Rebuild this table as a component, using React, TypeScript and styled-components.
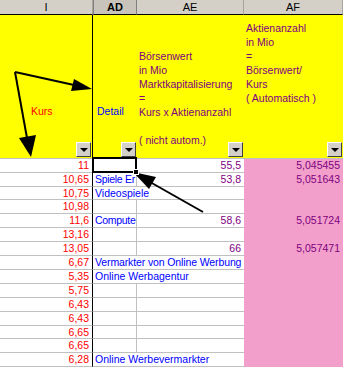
import React from 'react';
import styled, { createGlobalStyle, css } from 'styled-components';

const GlobalStyle = createGlobalStyle`
  html, body {
    margin: 0;
    padding: 0;
    background: #fff;
  }
`;

const COLS = '93px 44px 107px 99px';
const GRID = '#c0c0c0';

const Sheet = styled.div`
  position: relative;
  width: 343px;
  height: 367px;
  overflow: hidden;
  background: #fff;
  font-family: "Liberation Sans", Arial, sans-serif;
  font-size: 10.5px;
`;

const ColHeaderRow = styled.div`
  display: grid;
  grid-template-columns: ${COLS};
  height: 15px;
  font-size: 11px;
`;

const ColHead = styled.div<{ $active?: boolean }>`
  display: flex;
  align-items: center;
  justify-content: center;
  background: #d4d0c8;
  border-right: 1px solid #a8a49c;
  border-bottom: 1px solid #000;
  color: #000;
  font-weight: ${p => (p.$active ? 700 : 400)};
  ${p => p.$active && css`
    background: #c8c4bc;
    border-left: 1px solid #808080;
    border-right: 1px solid #808080;
  `}
`;

const TitleRow = styled.div`
  display: grid;
  grid-template-columns: ${COLS};
  height: 144px;
`;

const TitleCell = styled.div<{ $pb: number; $pl: number; $color: string; $edge?: boolean }>`
  position: relative;
  display: flex;
  flex-direction: column;
  justify-content: flex-end;
  background: #ffff00;
  border-bottom: 1px solid ${GRID};
  border-right: ${p => (p.$edge ? '1px solid #000' : 'none')};
  padding: 0 0 ${p => p.$pb}px ${p => p.$pl}px;
  color: ${p => p.$color};
  line-height: 14px;
  white-space: pre;
`;

const FilterButton = styled.div`
  position: absolute;
  right: 1px;
  bottom: 1px;
  width: 13px;
  height: 13px;
  background: #d4d0c8;
  border: 1px solid;
  border-color: #fff #404040 #404040 #fff;
  display: flex;
  align-items: center;
  justify-content: center;

  &::after {
    content: '';
    border-left: 4px solid transparent;
    border-right: 4px solid transparent;
    border-top: 4px solid #000;
    margin-top: 1px;
  }
`;

const Row = styled.div<{ $h: number }>`
  display: grid;
  grid-template-columns: ${COLS};
  height: ${p => p.$h}px;
`;

const Cell = styled.div<{
  $align?: 'left' | 'right';
  $color?: string;
  $pink?: boolean;
  $edge?: boolean;
  $noRight?: boolean;
  $span?: number;
  $tight?: number;
  $selected?: boolean;
}>`
  position: relative;
  box-sizing: border-box;
  line-height: 13px;
  white-space: nowrap;
  overflow: ${p => (p.$selected ? 'visible' : 'hidden')};
  text-align: ${p => p.$align || 'left'};
  color: ${p => p.$color || '#000'};
  letter-spacing: ${p => p.$tight || 0}px;
  padding: ${p => (p.$align === 'right' ? '0 3px 0 0' : '0 0 0 2px')};
  ${p => p.$span && css`grid-column: span ${p.$span};`}
  ${p => p.$pink
    ? css`background: #f2a0cb;`
    : css`
      background: #fff;
      border-bottom: 1px solid ${GRID};
      border-right: ${p.$edge ? '1px solid #000' : p.$noRight ? 'none' : `1px solid ${GRID}`};
    `}
  ${p => p.$selected && css`
    &::after {
      content: '';
      position: absolute;
      left: -1px;
      top: -2px;
      right: -1px;
      bottom: -1px;
      border: 2px solid #000;
    }
    &::before {
      content: '';
      position: absolute;
      right: -3px;
      bottom: -3px;
      width: 4px;
      height: 4px;
      background: #000;
      border: 1px solid #fff;
      z-index: 1;
    }
  `}
`;

const Arrows = styled.svg`
  position: absolute;
  left: 0;
  top: 0;
  pointer-events: none;
`;

interface SheetRow {
  kurs: string;
  detail?: string;
  spans?: boolean;
  tight?: number;
  wert?: string;
  anzahl?: string;
  h: number;
}

const rows: SheetRow[] = [
  { kurs: '11', wert: '55,5', anzahl: '5,045455', h: 14 },
  { kurs: '10,65', detail: 'Spiele Er', tight: -0.3, wert: '53,8', anzahl: '5,051643', h: 14 },
  { kurs: '10,75', detail: 'Videospiele', spans: true, h: 13 },
  { kurs: '10,98', h: 14 },
  { kurs: '11,6', detail: 'Compute', tight: -0.3, wert: '58,6', anzahl: '5,051724', h: 14 },
  { kurs: '13,16', h: 14 },
  { kurs: '13,05', wert: '66', anzahl: '5,057471', h: 14 },
  { kurs: '6,67', detail: 'Vermarkter von Online Werbung', tight: -0.12, spans: true, h: 14 },
  { kurs: '5,35', detail: 'Online Werbagentur', spans: true, h: 14 },
  { kurs: '5,75', h: 14 },
  { kurs: '6,43', h: 14 },
  { kurs: '6,43', h: 14 },
  { kurs: '6,65', h: 13 },
  { kurs: '6,65', h: 14 },
  { kurs: '6,28', detail: 'Online Werbevermarkter', spans: true, h: 14 },
];

const RED = '#ff0000';
const BLUE = '#0000ff';
const PURPLE = '#800080';

export default function App() {
  return (
    <>
      <GlobalStyle />
      <Sheet>
        <ColHeaderRow>
          <ColHead>I</ColHead>
          <ColHead $active>AD</ColHead>
          <ColHead>AE</ColHead>
          <ColHead>AF</ColHead>
        </ColHeaderRow>

        <TitleRow>
          <TitleCell $pb={40} $pl={31} $color={RED} $edge>
            Kurs
            <FilterButton />
          </TitleCell>
          <TitleCell $pb={40} $pl={4} $color={BLUE}>
            Detail
            <FilterButton />
          </TitleCell>
          <TitleCell $pb={11} $pl={2} $color={PURPLE}>
            {'Börsenwert\nin Mio\nMarktkapitalisierung\n=\nKurs x Aktienanzahl\n\n( nicht autom.)'}
            <FilterButton />
          </TitleCell>
          <TitleCell $pb={53} $pl={2} $color={PURPLE}>
            {'Aktienanzahl\nin Mio\n=\nBörsenwert/\nKurs\n( Automatisch )'}
            <FilterButton />
          </TitleCell>
        </TitleRow>

        {rows.map((r, i) => (
          <Row key={i} $h={r.h}>
            <Cell $align="right" $color={RED} $edge>{r.kurs}</Cell>
            {r.spans ? (
              <Cell $color={BLUE} $span={2} $tight={r.tight} $noRight>{r.detail}</Cell>
            ) : (
              <>
                <Cell $color={BLUE} $tight={r.tight} $selected={i === 0}>{r.detail}</Cell>
                <Cell $align="right" $color={PURPLE} $noRight>{r.wert}</Cell>
              </>
            )}
            <Cell $align="right" $color={PURPLE} $pink>{r.anzahl}</Cell>
          </Row>
        ))}

        <Arrows width="343" height="367" viewBox="0 0 343 367">
          <g stroke="#000" strokeWidth="2" fill="none">
            <line x1="15" y1="72" x2="74" y2="85" />
            <line x1="15" y1="72" x2="27" y2="138" />
            <line x1="203" y1="212" x2="150" y2="182" />
          </g>
          <g fill="#000">
            <polygon points="92,89 74,79 71,91" />
            <polygon points="31,157 36,135 19,138" />
            <polygon points="133,172 156,177 149,189" />
          </g>
        </Arrows>
      </Sheet>
    </>
  );
}
